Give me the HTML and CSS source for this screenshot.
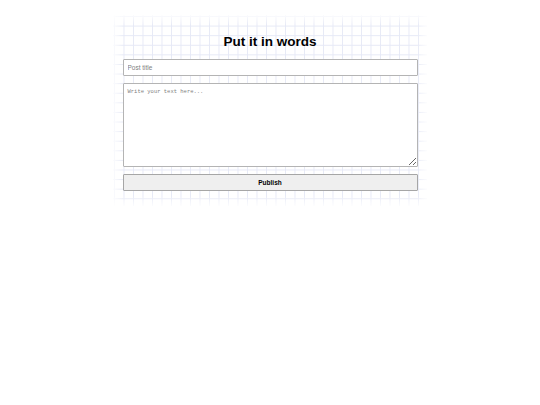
FILE: index.html
```html
<!DOCTYPE html>
<html>
<head>
<meta charset="utf-8">
<link rel="stylesheet" href="styles.css">
</head>
<body>
<main class="wrap">
  <h1 class="title">Put it in words</h1>
  <form class="form">
    <input class="field" type="text" placeholder="Post title">
    <textarea class="area" placeholder="Write your text here..."></textarea>
    <button class="btn" type="button">Publish</button>
  </form>
</main>
</body>
</html>
```
FILE: styles.css
```css
html, body {
  margin: 0;
  padding: 0;
  background: #ffffff;
}
body {
  font-family: "Liberation Sans", Arial, sans-serif;
}
.wrap {
  width: 295px;
  margin: 15px auto 0;
  padding: 19px 9.5px 15px;
  background-color: #fff;
  background-image:
    linear-gradient(to right, rgba(255,255,255,0.85) 0, rgba(255,255,255,0) 10px, rgba(255,255,255,0) calc(100% - 10px), rgba(255,255,255,0.85) 100%),
    linear-gradient(to bottom, rgba(255,255,255,0.85) 0, rgba(255,255,255,0) 10px, rgba(255,255,255,0) calc(100% - 10px), rgba(255,255,255,0.85) 100%),
    linear-gradient(to right, #e6e9f6 1px, transparent 1px),
    linear-gradient(to bottom, #e6e9f6 1px, transparent 1px);
  background-size: 100% 100%, 100% 100%, 9.5px 9.6px, 9.5px 9.6px;
  background-position: 0 0, 0 0, 1px 1px, 1px 1px;
}
.title {
  margin: 0 0 9px;
  font-size: 13.5px;
  line-height: 16px;
  font-weight: bold;
  text-align: center;
  color: #000;
}
.form {
  display: flex;
  flex-direction: column;
  gap: 7px;
}
.field, .area, .btn {
  box-sizing: border-box;
  width: 100%;
  margin: 0;
  border: 1px solid #b4b4b4;
  border-radius: 1px;
}
.field {
  height: 17px;
  padding: 0 4px;
  font-family: "Liberation Sans", Arial, sans-serif;
  font-size: 6.5px;
  background: #fff;
  outline: none;
}
.field::placeholder {
  color: #808080;
}
.area {
  display: block;
  height: 84px;
  padding: 4px 4px;
  font-family: "Liberation Mono", "Courier New", monospace;
  font-size: 5.5px;
  background: #fff;
  resize: vertical;
  outline: none;
}
.area::placeholder {
  color: #808080;
}
.btn {
  height: 17px;
  padding: 0;
  background: #efefef;
  border-color: #a6a6a6;
  font-family: "Liberation Sans", Arial, sans-serif;
  font-size: 6.5px;
  font-weight: bold;
  color: #000;
}
```
